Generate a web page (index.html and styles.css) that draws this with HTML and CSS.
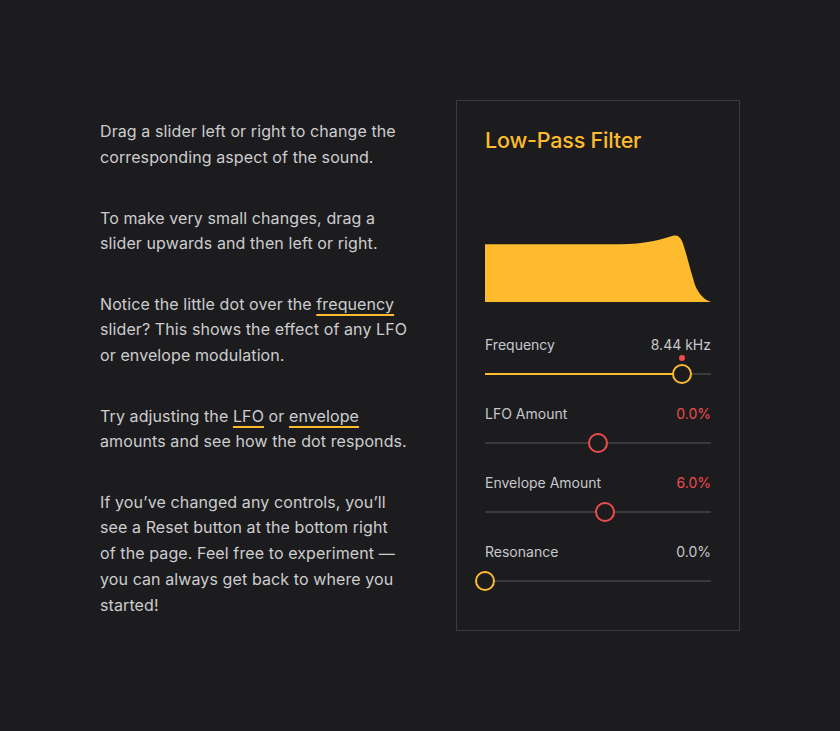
FILE: index.html
```html
<!DOCTYPE html>
<html lang="en">
<head>
<meta charset="utf-8">
<title>Low-Pass Filter</title>
<link rel="stylesheet" href="styles.css">
</head>
<body>
<main class="layout">
  <section class="notes">
    <p>Drag a slider left or right to change the corresponding aspect of the sound.</p>
    <p>To make very small changes, drag a slider upwards and then left or right.</p>
    <p>Notice the little dot over the <span class="ul">frequency</span> slider? This shows the effect of any LFO or envelope modulation.</p>
    <p>Try adjusting the <span class="ul">LFO</span> or <span class="ul">envelope</span> amounts and see how the dot responds.</p>
    <p>If you’ve changed any controls, you’ll see a Reset button at the bottom right of&nbsp;the page. Feel free to experiment — you can always get back to where you started!</p>
  </section>
  <section class="panel">
    <h2 class="title">Low-Pass Filter</h2>
    <svg class="graph" width="226" height="68" viewBox="0 0 226 68">
      <path d="M0,10.3 L135,10.3 C160,10 175,6 188,1.8 C192,0.6 195,2.5 197,7 C200,14 205,35 210,51 C214,61 220,66 226,68 L0,68 Z" fill="#fdbb2d"/>
    </svg>
    <div class="sliders">
      <div class="slider">
        <div class="row"><span class="label">Frequency</span><span class="value">8.44 kHz</span></div>
        <div class="track">
          <div class="fill" style="width:87.2%"></div>
          <div class="mod" style="left:87.2%"></div>
          <div class="thumb yellow" style="left:87.2%"></div>
        </div>
      </div>
      <div class="slider">
        <div class="row"><span class="label">LFO Amount</span><span class="value red">0.0%</span></div>
        <div class="track">
          <div class="thumb redring" style="left:50%"></div>
        </div>
      </div>
      <div class="slider">
        <div class="row"><span class="label">Envelope Amount</span><span class="value red">6.0%</span></div>
        <div class="track">
          <div class="thumb redring" style="left:53%"></div>
        </div>
      </div>
      <div class="slider">
        <div class="row"><span class="label">Resonance</span><span class="value">0.0%</span></div>
        <div class="track">
          <div class="thumb yellow" style="left:0%"></div>
        </div>
      </div>
    </div>
  </section>
</main>
</body>
</html>
```

FILE: styles.css
```css
html, body {
  margin: 0;
  padding: 0;
  background: #1c1c1e;
}

body {
  font-family: Inter, "Noto Sans", sans-serif;
  color: #cdcdcf;
  -webkit-font-smoothing: antialiased;
}

.layout {
  width: 640px;
  margin: 0 auto;
  padding-top: 100px;
  display: flex;
  align-items: center;
  gap: 48px;
}

.notes {
  width: 308px;
  flex: none;
  padding-top: 7px;
  font-size: 16px;
  line-height: 25.8px;
  letter-spacing: 0.1px;
}

.notes p {
  margin: 0 0 34.5px 0;
}

.notes p:last-child {
  margin-bottom: 0;
}

.ul {
  text-decoration: underline;
  text-decoration-color: #fdbb2d;
  text-decoration-thickness: 2px;
  text-underline-offset: 4px;
}

.panel {
  flex: none;
  border: 1px solid #3b3b3e;
  padding: 25px 28px 39px;
  width: 226px;
}

.title {
  margin: 0;
  font-family: Inter, "Noto Sans", sans-serif;
  font-weight: 500;
  font-size: 21.5px;
  line-height: 28px;
  color: #fdbb2d;
  letter-spacing: -0.2px;
}

.graph {
  display: block;
  margin-top: 80px;
}

.sliders {
  margin-top: 33px;
  display: flex;
  flex-direction: column;
  gap: 20px;
}

.row {
  display: flex;
  justify-content: space-between;
  font-size: 14px;
  line-height: 20px;
  color: #c6c8cc;
}

.value.red {
  color: #ef4b4f;
}

.track {
  position: relative;
  height: 20px;
  margin-top: 9px;
}

.track::before {
  content: "";
  position: absolute;
  left: 0;
  right: 0;
  top: 9px;
  height: 2px;
  background: #3a3a3d;
}

.fill {
  position: absolute;
  left: 0;
  top: 9px;
  height: 2px;
  background: #fdbb2d;
}

.thumb {
  position: absolute;
  top: 0;
  width: 16px;
  height: 16px;
  border-radius: 50%;
  border: 2px solid #fdbb2d;
  background: #1c1c1e;
  transform: translateX(-50%);
}

.thumb.redring {
  border-color: #ef4b4f;
}

.mod {
  position: absolute;
  top: -9px;
  width: 6px;
  height: 6px;
  border-radius: 50%;
  background: #ef4b4f;
  transform: translateX(-50%);
}
```
